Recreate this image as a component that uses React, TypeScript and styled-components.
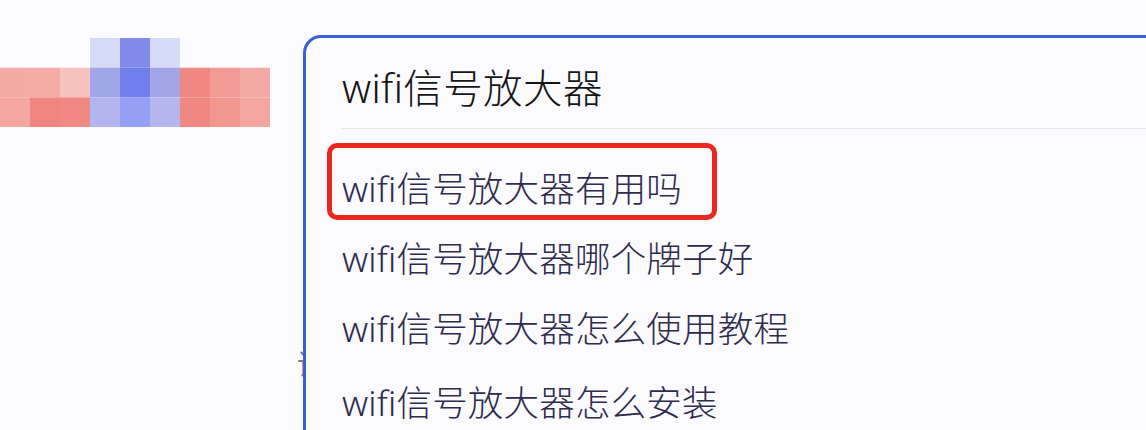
import React from 'react';
import styled, {createGlobalStyle} from 'styled-components';

const suggestions = [
    'wifi信号放大器有用吗',
    'wifi信号放大器哪个牌子好',
    'wifi信号放大器怎么使用教程',
    'wifi信号放大器怎么安装',
];

// blurred logo: 9 x 3 mosaic, null = empty cell
const mosaic: (string | null)[][] = [
    [null, null, null, '#d5daf7', '#7f8aeb', '#d6dbf8', null, null, null],
    ['#f4aaa5', '#f4aca7', '#f8c2bd', '#a1a6e8', '#717deb', '#a2a6e6', '#ef8880', '#f29b94', '#f4aaa4'],
    ['#f4a6a1', '#ef8780', '#f08883', '#b3b5ef', '#93a0f3', '#b4b6ee', '#ef8881', '#f19790', '#f4a7a1'],
];

const MosaicLogo = () => (
    <svg width="270" height="89" viewBox="0 0 270 89">
        {mosaic.map((row, r) =>
            row.map((c, i) => c && (
                <rect key={`${r}-${i}`} x={i * 30} y={r * 29.7} width="30" height="29.7" fill={c}/>
            ))
        )}
    </svg>
);


const App = () => {

    return (
        <Page>
            <GlobalStyle/>
            <Side>
                <MosaicLogo/>
                <Hint>请</Hint>
            </Side>

            <SearchBox>
                <Query>wifi信号放大器</Query>
                <Divider/>
                <List>
                    {suggestions.map((s, i) => (
                        <Item key={s} $last={i === suggestions.length - 1}>
                            {i === 0 && <Highlight/>}
                            {s}
                        </Item>
                    ))}
                </List>
            </SearchBox>
        </Page>
    );
}


export default App;

const GlobalStyle = createGlobalStyle`
  body {
    margin: 0;
    background: #fcfcfe;
    overflow: hidden;
  }
`;

const Highlight = styled.span`
  position: absolute;
  top: -10px;
  bottom: 3px;
  left: -15px;
  width: 390px;
  border: 5px solid #e9271c;
  border-radius: 10px;
  box-sizing: border-box;
`;

const Item = styled.li<{ $last?: boolean }>`
  position: relative;
  height: 70px;
  line-height: 70px;
  margin-top: ${p => p.$last ? '4px' : '0'};
  font-size: 35.5px;
  font-weight: 300;
  letter-spacing: 0.2px;
  color: #2e2b4d;
  white-space: nowrap;
`;

const List = styled.ul`
  list-style: none;
  margin: 0;
  padding: 24px 0 0;
`;

const Divider = styled.div`
  height: 1px;
  background: #e4e6ec;
`;

const Query = styled.div`
  box-sizing: border-box;
  height: 90px;
  padding-top: 10px;
  line-height: 80px;
  font-size: 39.5px;
  font-weight: 300;
  letter-spacing: 0.4px;
  color: #151515;
  white-space: nowrap;
`;

const SearchBox = styled.div`
  position: relative;
  z-index: 1;
  flex: 1;
  min-height: 520px;
  margin: 35px -40px 0 0;
  padding-left: 36px;
  border: 3px solid #3b5fd8;
  border-radius: 18px;
  background: #fbfbfe;
  font-family: "Noto Sans", "Noto Sans CJK SC", sans-serif;
`;

const Hint = styled.span`
  align-self: flex-end;
  margin: 222px -22px 0 0;
  font-family: "Noto Sans CJK SC", sans-serif;
  font-size: 28px;
  line-height: 28px;
  color: #7a7a80;
`;

const Side = styled.div`
  display: flex;
  flex-direction: column;
  flex-shrink: 0;
  width: 303px;
  padding-top: 38px;
  box-sizing: border-box;
`;

const Page = styled.div`
  display: flex;
  align-items: flex-start;
  width: 100%;
  height: 430px;
  overflow: hidden;
`;
